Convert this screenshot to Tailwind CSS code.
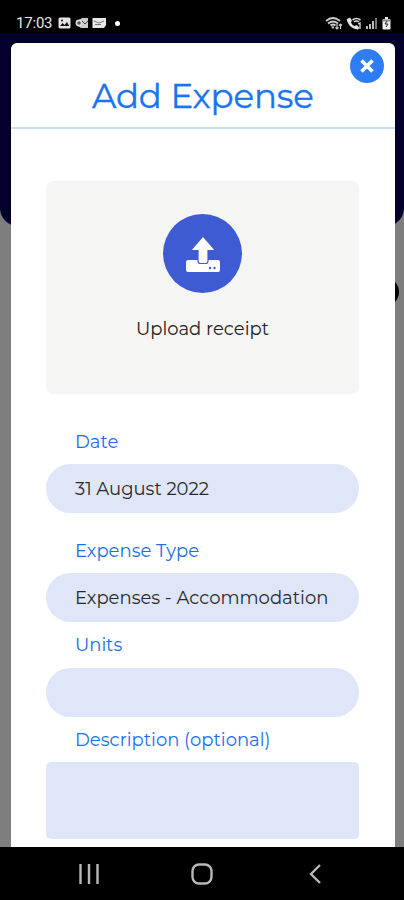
<!DOCTYPE html>
<html lang="en">
<head>
<meta charset="utf-8">
<title>Add Expense</title>
<script src="https://cdn.jsdelivr.net/npm/@tailwindcss/browser@4"></script>
</head>
<body class="w-[404px] h-[900px] overflow-hidden bg-black font-['Montserrat','Inter',sans-serif]">
<div class="relative flex flex-col w-[404px] h-[900px]">
  <header class="flex items-center justify-between h-[33px] pt-[13px] pl-4 pr-[13px] shrink-0 text-[#e8e8e8]">
    <div class="flex items-center">
      <span class="w-[37px] whitespace-nowrap font-['Roboto',sans-serif] text-[15px] leading-5 tracking-[-0.2px]">17:03</span>
      <svg class="ml-[5px]" width="13" height="12" viewBox="0 0 13 12"><rect x=".5" y=".5" width="12" height="11" rx="1.5" fill="#e4e4e4"/><path d="M2 9l2.500-3 2 2L9 5l2.200 4z" fill="#111"/><circle cx="4" cy="3.500" r="1" fill="#111"/></svg>
      <svg class="ml-1" width="14" height="12" viewBox="0 0 14 12"><path d="M4 3l3-2h6v10H6L3 9z" fill="#ccc"/><circle cx="4" cy="6" r="2.600" fill="#555" stroke="#ddd" stroke-width="1.600"/><path d="M7 4l3 3 3-3" stroke="#444" fill="none"/></svg>
      <svg class="ml-[3px]" width="15" height="12" viewBox="0 0 15 12"><path d="M.5 1h13.500v7l-2 3H.5z" fill="#e8e8e8"/><path d="M2 4l5 2 5-2M3 7.500h6" stroke="#777" fill="none"/><path d="M9 9l2 2 3-4" stroke="#ddd" fill="none"/></svg>
      <span class="ml-[8px] size-[5px] rounded-full bg-white"></span>
    </div>
    <div class="flex items-center gap-1">
      <svg width="18" height="14" viewBox="0 0 18 14" fill="none" stroke="#ccc" stroke-width="1.700"><path d="M1 5q7-6 14 0M3 7.500q5-4 10 0M5.500 9.500q2.500-2 5 0"/><path d="M6 10.500l2 2.500 1.500-2.500z" fill="#ddd" stroke="none"/><path d="M12 8v5M10.500 11.500L12 13l1.500-1.500M15.500 13V8M14 9.500L15.500 8 17 9.500" stroke-width="1.200"/></svg>
      <svg width="15" height="13" viewBox="0 0 15 13"><path d="M0 2l3-1.500 2 3-1 2q1 2.500 3.500 3.500L9.500 8l3 2.500L11 12.500Q3 12 0 4z" fill="#e4e4e4"/><path d="M5.500 3q4-3 8 0M7 5q2.500-2 5 0" stroke="#ddd" stroke-width="1.600" fill="none"/><path d="M11 7l2-1v6" stroke="#ddd" stroke-width="1.300" fill="none"/></svg>
      <svg width="11" height="12" viewBox="0 0 11 12" fill="#bbb"><path d="M0 9h2v3H0zM3 7h2v5H3zM6 4h2v8H6z"/><path d="M9 1h2v11H9z" fill="#777"/></svg>
      <svg class="ml-[1px]" width="9" height="13" viewBox="0 0 9 13"><path d="M3 0h3v2h1.500q1 0 1 1v8.500q0 1-1 1h-6q-1 0-1-1V3q0-1 1-1H3z" fill="#eee"/><path d="M1 2.500h7v2H1z" fill="#888"/><path d="M5 4L3 7h3L4 10" fill="none" stroke="#222"/></svg>
    </div>
  </header>

  <div class="relative h-[814px] shrink-0 overflow-hidden bg-[#7e7e7f] pt-[10px] pl-[10.500px] pr-[9px]">
    <div class="absolute inset-x-0 top-0 h-[193px] rounded-b-[18px] bg-[#02002a]"></div>
    <div class="absolute top-[245px] right-[5px] size-[28px] rounded-full bg-black"></div>

    <main class="relative flex flex-col h-[804px] rounded-t-[6px] bg-white">
      <button aria-label="Close" class="absolute top-[6px] right-[11px] flex items-center justify-center size-[34px] rounded-full bg-[#2f7df6]">
        <svg width="14" height="14" viewBox="0 0 14 14" stroke="#fff" stroke-width="3.600"><path d="M1.500 1.500l11 11M12.500 1.500l-11 11"/></svg>
      </button>
      <h1 class="flex h-[86px] shrink-0 justify-center pt-[30px] border-b-2 border-[#c8dcf8] text-[34px] leading-[46px] tracking-[-0.15px] whitespace-nowrap text-[#1a73f0] [-webkit-text-stroke:0.35px_#1a73f0]"><span>Add Expense</span></h1>

      <section class="mt-[52px] ml-[35.500px] flex w-[313px] h-[213px] shrink-0 flex-col items-center rounded-[7px] bg-[#f5f5f4] pt-[33px]">
        <div class="flex size-[79px] items-center justify-center rounded-full bg-[#3f5bd3]">
          <svg width="36" height="38" viewBox="0 0 36 38"><rect x="1" y="25" width="34" height="12" rx="2" fill="#fff"/><path d="M18 1L30.500 15.500H23V26q0 2.500-2.500 2.500h-5Q13 28.500 13 26V15.500H5.500z" fill="#fff" stroke="#3f5bd3" stroke-width="1.200"/><circle cx="25" cy="33" r="1.200" fill="#3f5bd3"/><circle cx="29.500" cy="33" r="1.200" fill="#3f5bd3"/></svg>
        </div>
        <p class="mt-[24px] text-[18px] leading-6 text-[#222]"><span>Upload receipt</span></p>
      </section>

      <form class="ml-[35.500px] flex w-[313px] flex-col text-[18px] leading-6 whitespace-nowrap">
        <label class="mt-[36px] pl-[29px] text-[#1a6fe8]"><span>Date</span></label>
        <div class="mt-[10px] flex h-[49px] items-center rounded-full bg-[#dfe6f8] pl-[29px] text-[#2a2a2e]"><span>31 August 2022</span></div>
        <label class="mt-[26px] pl-[29px] text-[#1a6fe8]"><span>Expense Type</span></label>
        <div class="mt-[10px] flex h-[49px] items-center rounded-full bg-[#dfe6f8] pl-[29px] text-[#2a2a2e]"><span>Expenses - Accommodation</span></div>
        <label class="mt-[11px] pl-[29px] text-[#1a6fe8]"><span>Units</span></label>
        <div class="mt-[11px] h-[49px] rounded-full bg-[#dfe6f8]"></div>
        <label class="mt-[11px] pl-[29px] text-[#1a6fe8]"><span>Description (optional)</span></label>
        <div class="mt-[10px] h-[77px] rounded-[5px] bg-[#dfe6f8]"></div>
      </form>
    </main>
  </div>

  <nav class="flex h-[53px] items-center pl-[79px] text-[#b8b8b8]">
    <svg width="20" height="20" viewBox="0 0 20 20" stroke="currentColor" stroke-width="2.400"><path d="M1.500 0v20M10 0v20M18.500 0v20"/></svg>
    <svg class="ml-[92px]" width="22" height="22" viewBox="0 0 22 22" fill="none" stroke="currentColor" stroke-width="2.400"><rect x="1.500" y="1.500" width="19" height="19" rx="6.500"/></svg>
    <svg class="ml-[96px]" width="12" height="20" viewBox="0 0 12 20" fill="none" stroke="currentColor" stroke-width="2.400"><path d="M11 1L2 10l9 9"/></svg>
  </nav>
</div>
</body>
</html>
